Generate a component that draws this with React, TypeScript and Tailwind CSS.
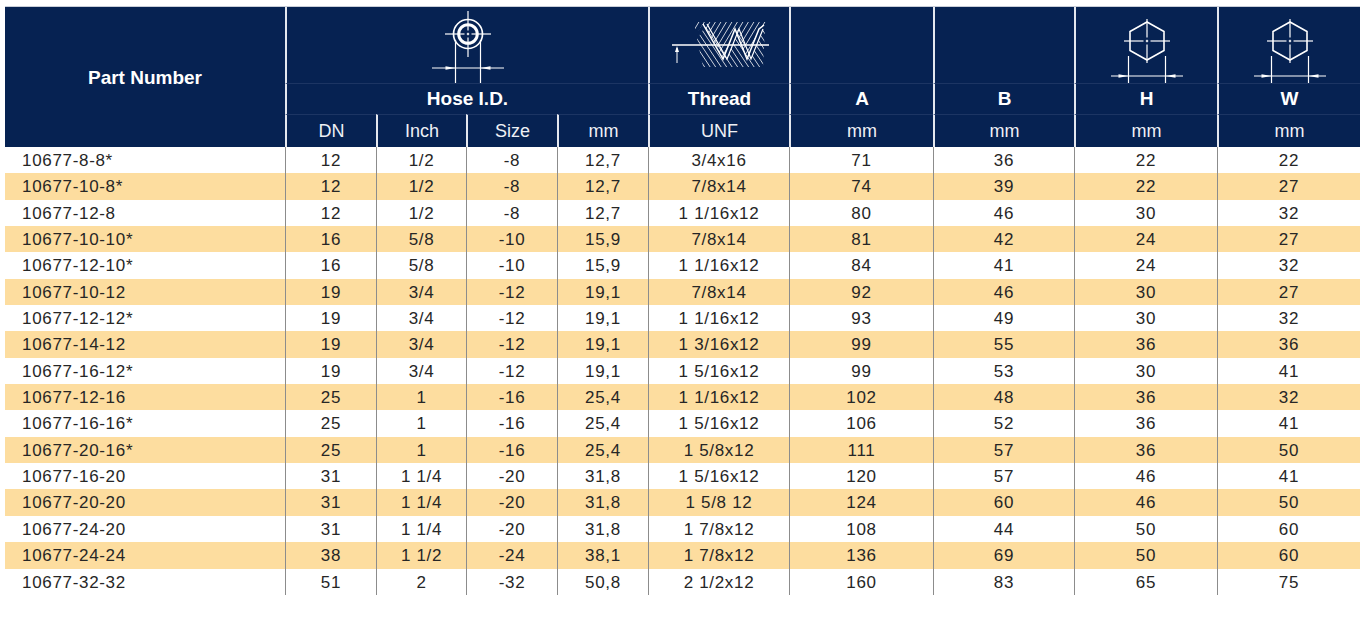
import type { ReactNode } from "react"

const NAVY = "bg-[#062252]"

const ROWS: string[][] = [
  ["10677-8-8*", "12", "1/2", "-8", "12,7", "3/4x16", "71", "36", "22", "22"],
  ["10677-10-8*", "12", "1/2", "-8", "12,7", "7/8x14", "74", "39", "22", "27"],
  ["10677-12-8", "12", "1/2", "-8", "12,7", "1 1/16x12", "80", "46", "30", "32"],
  ["10677-10-10*", "16", "5/8", "-10", "15,9", "7/8x14", "81", "42", "24", "27"],
  ["10677-12-10*", "16", "5/8", "-10", "15,9", "1 1/16x12", "84", "41", "24", "32"],
  ["10677-10-12", "19", "3/4", "-12", "19,1", "7/8x14", "92", "46", "30", "27"],
  ["10677-12-12*", "19", "3/4", "-12", "19,1", "1 1/16x12", "93", "49", "30", "32"],
  ["10677-14-12", "19", "3/4", "-12", "19,1", "1 3/16x12", "99", "55", "36", "36"],
  ["10677-16-12*", "19", "3/4", "-12", "19,1", "1 5/16x12", "99", "53", "30", "41"],
  ["10677-12-16", "25", "1", "-16", "25,4", "1 1/16x12", "102", "48", "36", "32"],
  ["10677-16-16*", "25", "1", "-16", "25,4", "1 5/16x12", "106", "52", "36", "41"],
  ["10677-20-16*", "25", "1", "-16", "25,4", "1 5/8x12", "111", "57", "36", "50"],
  ["10677-16-20", "31", "1 1/4", "-20", "31,8", "1 5/16x12", "120", "57", "46", "41"],
  ["10677-20-20", "31", "1 1/4", "-20", "31,8", "1 5/8 12", "124", "60", "46", "50"],
  ["10677-24-20", "31", "1 1/4", "-20", "31,8", "1 7/8x12", "108", "44", "50", "60"],
  ["10677-24-24", "38", "1 1/2", "-24", "38,1", "1 7/8x12", "136", "69", "50", "60"],
  ["10677-32-32", "51", "2", "-32", "50,8", "2 1/2x12", "160", "83", "65", "75"],
]

const GRID =
  "grid grid-cols-[280px_91px_90px_91px_91px_141px_144px_141px_143px_143px]"

// dashed centre line: long - dot - long
function CenterLine({ x1, y1, x2, y2 }: { x1: number; y1: number; x2: number; y2: number }) {
  const horiz = y1 === y2
  const mid = horiz ? (x1 + x2) / 2 : (y1 + y2) / 2
  const a = horiz ? x1 : y1
  const b = horiz ? x2 : y2
  const segs = [
    [a, mid - 3.5],
    [mid - 1.2, mid + 1.2],
    [mid + 3.5, b],
  ]
  return (
    <g>
      {segs.map(([s, e], i) =>
        horiz ? (
          <line key={i} x1={s} y1={y1} x2={e} y2={y1} />
        ) : (
          <line key={i} x1={x1} y1={s} x2={x1} y2={e} />
        )
      )}
    </g>
  )
}

function DimLine({ y, left, right, x1, x2 }: { y: number; left: number; right: number; x1: number; x2: number }) {
  return (
    <g>
      <line x1={x1} y1={y} x2={x2} y2={y} />
      <path d={`M${left - 10} ${y - 1.7} L${left} ${y} L${left - 10} ${y + 1.7} Z`} fill="white" stroke="none" />
      <path d={`M${right + 10} ${y - 1.7} L${right} ${y} L${right + 10} ${y + 1.7} Z`} fill="white" stroke="none" />
    </g>
  )
}

function HoseIcon() {
  return (
    <svg width="80" height="76" viewBox="0 0 80 76" fill="none" stroke="white" strokeWidth="1.2">
      <circle cx="40" cy="27" r="14.5" strokeWidth="1.7" />
      <circle cx="40" cy="27" r="9.3" strokeWidth="3" />
      <CenterLine x1={17} y1={27} x2={63} y2={27} />
      <CenterLine x1={40} y1={4} x2={40} y2={50} />
      <line x1="27.5" y1="33" x2="27.5" y2="76" />
      <line x1="52.5" y1="33" x2="52.5" y2="76" />
      <DimLine y={61} left={27.5} right={52.5} x1={4} x2={76} />
    </svg>
  )
}

function HexIcon() {
  return (
    <svg width="78" height="68" viewBox="0 0 78 68" fill="none" stroke="white" strokeWidth="1.2">
      <path d="M39 5 L56 14.5 L56 33.5 L39 43 L22 33.5 L22 14.5 Z" strokeWidth="1.6" />
      <CenterLine x1={16} y1={24} x2={62} y2={24} />
      <CenterLine x1={39} y1={2} x2={39} y2={46} />
      <line x1="20.5" y1="39" x2="20.5" y2="66" />
      <line x1="57.5" y1="39" x2="57.5" y2="66" />
      <DimLine y={59} left={20.5} right={57.5} x1={3} x2={75} />
    </svg>
  )
}

function ThreadIcon() {
  const zigA = "36,3 56,38 68,8 80,38 92,8 97,4"
  const zigB = "40,3 60,38 72,8 84,38 96,8"
  const hatch: ReactNode[] = []
  for (let i = -30; i < 110; i += 5.5) {
    hatch.push(<line key={"u" + i} x1={i} y1={40} x2={i + 24} y2={0} />)
  }
  const hatchDown: ReactNode[] = []
  for (let i = 0; i < 120; i += 5.5) {
    hatchDown.push(<line key={"d" + i} x1={i} y1={6} x2={i + 28} y2={48} />)
  }
  return (
    <svg width="105" height="50" viewBox="0 0 105 50" fill="none" stroke="white" strokeWidth="1">
      <defs>
        <clipPath id="thr-up">
          <polygon points={`28,1 100,1 100,4 ${zigA.split(" ").reverse().join(" ")} 28,14`} />
        </clipPath>
        <clipPath id="thr-down">
          <polygon points={`30,18 ${zigB} 98,8 96,46 36,46`} />
        </clipPath>
      </defs>
      <g clipPath="url(#thr-up)" strokeWidth="0.8">{hatch}</g>
      <g clipPath="url(#thr-down)" strokeWidth="0.8">{hatchDown}</g>
      <polyline points={zigA} strokeWidth="1.5" />
      <polyline points={zigB} strokeWidth="1.2" />
      <line x1="5" y1="24" x2="102" y2="24" strokeWidth="1.6" />
      <line x1="10" y1="27" x2="10" y2="42" />
      <path d="M10 25 L8 31 L12 31 Z" fill="white" stroke="none" />
    </svg>
  )
}

const divider = "border-l-2 border-l-[#e4e7ee]"
const hLine = "border-t border-t-[#1c3563]"

function Header() {
  return (
    <div
      className={`${GRID} grid-rows-[76px_31px_33px] ${NAVY} text-white border-t border-t-[#c9ced8]`}
    >
      <div className="row-span-3 flex items-center justify-center pt-[3px] text-[19px] font-bold">
        Part Number
      </div>

      <div className={`col-span-4 flex items-end justify-center ${divider}`}>
        <HoseIcon />
      </div>
      <div className={`flex justify-center pt-[14px] ${divider}`}>
        <ThreadIcon />
      </div>
      <div className={divider} />
      <div className={divider} />
      <div className={`flex justify-center pt-[10px] ${divider}`}>
        <HexIcon />
      </div>
      <div className={`flex justify-center pt-[10px] ${divider}`}>
        <HexIcon />
      </div>

      <div className={`col-span-4 flex items-center justify-center text-[19px] font-bold ${divider} ${hLine}`}>
        Hose I.D.
      </div>
      {["Thread", "A", "B", "H", "W"].map((t) => (
        <div key={t} className={`flex items-center justify-center text-[19px] font-bold ${divider} ${hLine}`}>
          {t}
        </div>
      ))}

      {["DN", "Inch", "Size", "mm", "UNF", "mm", "mm", "mm", "mm"].map((t, i) => (
        <div
          key={i}
          className={`flex items-center justify-center text-[18px] text-[#eef0f5] ${divider} ${hLine}`}
        >
          {t}
        </div>
      ))}
    </div>
  )
}

export default function App() {
  return (
    <div className="min-h-screen bg-white pt-[6px] pl-[5px] font-['Liberation_Sans',Arial,sans-serif]">
      <div className="w-[1355px]">
        <Header />
        <div>
          {ROWS.map((row, r) => (
            <div
              key={row[0]}
              className={`${GRID} h-[26.35px] text-[17px] tracking-[0.04em] text-[#262626] ${
                r % 2 === 1 ? "bg-[#fddd9f]" : "bg-white"
              }`}
            >
              {row.map((cell, c) =>
                c === 0 ? (
                  <div key={c} className="flex items-center pl-[17px] pt-[1px]">
                    {cell}
                  </div>
                ) : (
                  <div
                    key={c}
                    className="flex items-center justify-center border-l border-[#8c8c8c] pt-[1px]"
                  >
                    {cell}
                  </div>
                )
              )}
            </div>
          ))}
        </div>
      </div>
    </div>
  )
}
